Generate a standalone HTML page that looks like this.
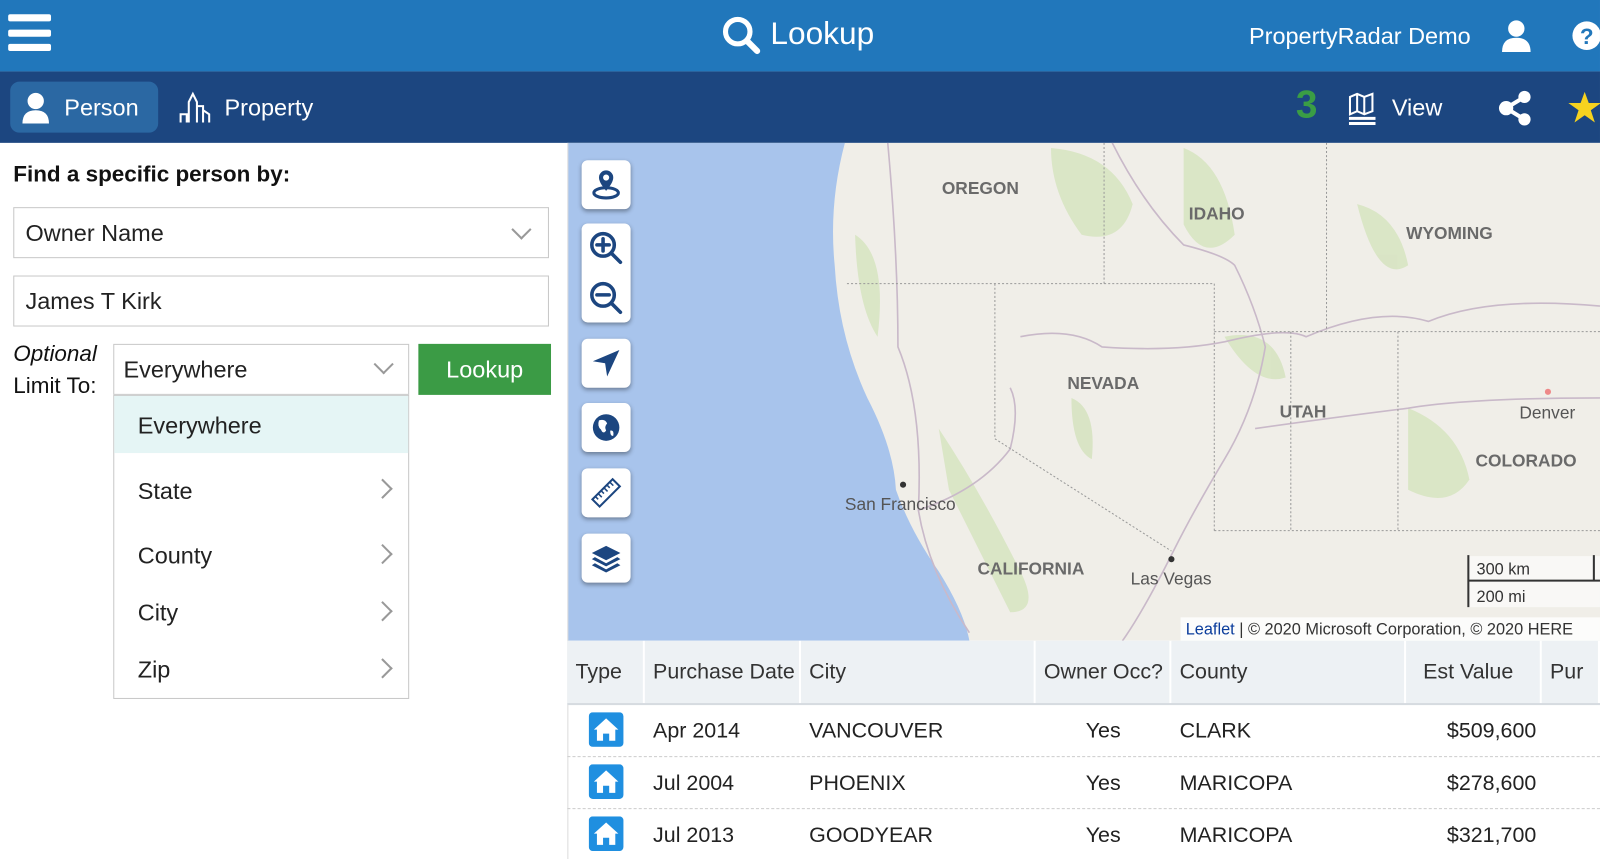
<!DOCTYPE html>
<html><head><meta charset="utf-8"><style>
*{box-sizing:border-box;margin:0;padding:0}
body{width:1600px;height:859px;overflow:hidden;background:#fff;font-family:"Liberation Sans",sans-serif}
#w{position:absolute;left:0;top:0;width:1568px;height:842px;transform:scale(1.0204);transform-origin:0 0}
.a{position:absolute}
.top{left:0;top:0;width:1568px;height:70px;background:#2177bb}
.sub{left:0;top:70px;width:1568px;height:70px;background:#1c4680}
.wt{color:#fff}
.box{border:1px solid #c8c8c8;background:#fff;font-size:23px;color:#222;padding-left:11px;display:flex;align-items:center}
.mb{left:570px;width:48px;height:48px;background:#fff;border-radius:6px;box-shadow:0 2px 4px rgba(0,0,0,.35);display:flex;align-items:center;justify-content:center}
.th{top:628px;height:62px;background:#edf1f4;font-size:21px;color:#333;display:flex;align-items:center;padding-left:8px;border-right:2px solid #fff}
.td{font-size:21px;color:#222}
.dd{left:135px;font-size:23px;color:#222}
.chev{left:368px;width:14px;height:14px;border-right:2px solid #999;border-top:2px solid #999;transform:rotate(45deg)}
.hl{height:0;border-top:1px dashed #ccc;left:556px;width:1012px}
</style></head><body><div id="w">
<div class="a top"></div><div class="a sub"></div>
<!-- hamburger -->
<div class="a" style="left:8px;top:14px;width:42px;height:7px;background:#fff;border-radius:2px"></div>
<div class="a" style="left:8px;top:29px;width:42px;height:7px;background:#fff;border-radius:2px"></div>
<div class="a" style="left:8px;top:43px;width:42px;height:7px;background:#fff;border-radius:2px"></div>
<svg class="a" style="left:706px;top:14px" width="40" height="40" viewBox="0 0 40 40"><circle cx="17" cy="17" r="12" fill="none" stroke="#fff" stroke-width="5"/><line x1="26" y1="26" x2="36" y2="36" stroke="#fff" stroke-width="6" stroke-linecap="round"/></svg>
<div class="a wt" style="left:755px;top:15px;font-size:31px">Lookup</div>
<div class="a wt" style="left:1224px;top:22px;font-size:23px">PropertyRadar Demo</div>
<svg class="a" style="left:1470px;top:18px" width="32" height="34" viewBox="0 0 32 34"><circle cx="16" cy="10" r="8" fill="#fff"/><path d="M2 33 Q2 19 16 19 Q30 19 30 33Z" fill="#fff"/></svg>
<svg class="a" style="left:1540px;top:20px" width="28" height="30" viewBox="0 0 28 30"><circle cx="15" cy="15" r="14" fill="#fff"/><text x="15" y="23" font-size="22" font-weight="bold" text-anchor="middle" fill="#2177bb" font-family="Liberation Sans">?</text></svg>
<!-- subbar -->
<div class="a" style="left:10px;top:80px;width:145px;height:50px;background:#2b68a3;border-radius:9px"></div>
<svg class="a" style="left:20px;top:90px" width="30" height="32" viewBox="0 0 30 32"><circle cx="15" cy="9" r="8" fill="#fff"/><path d="M2 31 Q2 18 15 18 Q28 18 28 31Z" fill="#fff"/></svg>
<div class="a wt" style="left:63px;top:92px;font-size:23px">Person</div>
<svg class="a" style="left:175px;top:88px" width="36" height="34" viewBox="0 0 36 34" fill="none" stroke="#fff" stroke-width="2"><path d="M2 32 V24 H8 V32 M10 32 V12 L14 4 L18 12 V32 M18 32 V16 H24 V32 M24 32 V20 L30 24 V32"/></svg>
<div class="a wt" style="left:220px;top:92px;font-size:23px">Property</div>
<div class="a" style="left:1270px;top:82px;font-size:38px;font-weight:bold;color:#3a9d45">3</div>
<svg class="a" style="left:1320px;top:90px" width="30" height="34" viewBox="0 0 30 34" fill="none" stroke="#fff" stroke-width="2"><path d="M3 5 L10 2 L17 5 L25 2 V19 L17 22 L10 19 L3 22Z M10 2 V19 M17 5 V22"/><path d="M2 26 H28 M2 31 H28" stroke-width="3"/></svg>
<div class="a wt" style="left:1364px;top:92px;font-size:23px">View</div>
<svg class="a" style="left:1468px;top:88px" width="34" height="36" viewBox="0 0 34 36"><circle cx="26" cy="7" r="6" fill="#fff"/><circle cx="8" cy="18" r="7" fill="#fff"/><circle cx="26" cy="29" r="6" fill="#fff"/><path d="M8 18 L26 7 M8 18 L26 29" stroke="#fff" stroke-width="4"/></svg>
<svg class="a" style="left:1536px;top:88px" width="34" height="34" viewBox="0 0 34 34"><path d="M17 2 L21 13 L33 13 L23 20 L27 32 L17 25 L7 32 L11 20 L1 13 L13 13Z" fill="#f6d21f"/></svg>
<!-- left panel -->
<div class="a" style="left:13px;top:158px;font-size:22px;font-weight:bold;color:#111">Find a specific person by:</div>
<div class="a box" style="left:13px;top:203px;width:525px;height:50px">Owner Name</div>
<div class="a" style="left:504px;top:218px;width:14px;height:14px;border-right:2px solid #999;border-bottom:2px solid #999;transform:rotate(45deg)"></div>
<div class="a box" style="left:13px;top:270px;width:525px;height:50px">James T Kirk</div>
<div class="a" style="left:13px;top:334px;font-size:22px;font-style:italic;color:#111">Optional</div>
<div class="a" style="left:13px;top:365px;font-size:22px;color:#111">Limit To:</div>
<div class="a box" style="left:111px;top:337px;width:290px;height:50px;padding-left:9px">Everywhere</div>
<div class="a" style="left:369px;top:350px;width:14px;height:14px;border-right:2px solid #999;border-bottom:2px solid #999;transform:rotate(45deg)"></div>
<div class="a" style="left:410px;top:337px;width:130px;height:50px;background:#3b9b45;color:#fff;font-size:23px;display:flex;align-items:center;justify-content:center">Lookup</div>
<div class="a" style="left:111px;top:387px;width:290px;height:298px;border:1px solid #c8c8c8;background:#fff"></div>
<div class="a" style="left:112px;top:388px;width:288px;height:56px;background:#e5f5f5"></div>
<div class="a dd" style="top:404px">Everywhere</div>
<div class="a dd" style="top:468px">State</div><div class="a chev" style="top:472px"></div>
<div class="a dd" style="top:531px">County</div><div class="a chev" style="top:536px"></div>
<div class="a dd" style="top:587px">City</div><div class="a chev" style="top:592px"></div>
<div class="a dd" style="top:643px">Zip</div><div class="a chev" style="top:648px"></div>
<!-- map -->
<svg class="a" style="left:556px;top:140px" width="1012" height="488" viewBox="556 140 1012 488">
<rect x="556" y="140" width="1012" height="488" fill="#f0eee8"/>
<path d="M556 140 H828 Q812 200 818 260 Q822 330 850 390 Q876 440 878 480 Q892 520 920 560 Q945 600 950 628 H556Z" fill="#a8c4ec"/>
<g fill="#d7e4c2" opacity=".9">
<path d="M1030 145 Q1090 150 1110 200 Q1100 240 1060 230 Q1030 190 1030 145Z"/>
<path d="M1160 145 Q1200 160 1210 230 Q1180 260 1160 220Z"/>
<path d="M838 230 Q870 250 860 330 Q840 300 838 230Z"/>
<path d="M920 420 Q960 480 1000 560 Q1020 600 990 600 Q960 540 930 480Z"/>
<path d="M1380 400 Q1430 420 1440 470 Q1420 500 1380 480Z"/>
<path d="M1050 390 Q1075 400 1070 450 Q1050 440 1050 390Z"/>
<path d="M1200 330 Q1250 320 1260 370 Q1230 380 1200 330Z"/>
<path d="M1330 200 Q1370 210 1380 260 Q1350 280 1330 200Z"/>
</g>
<g fill="none" stroke="#c9b9c9" stroke-width="1.6">
<path d="M870 140 Q880 250 880 340 Q905 400 900 500 Q910 560 950 620"/>
<path d="M1000 330 Q1050 320 1080 340 Q1150 345 1200 335 Q1260 320 1280 330 Q1350 300 1400 315 Q1460 290 1568 300"/>
<path d="M1090 140 Q1120 200 1160 240 Q1200 250 1210 260 Q1230 300 1240 340 Q1230 400 1200 450 Q1170 500 1150 540 Q1120 600 1100 628"/>
<path d="M1230 420 Q1300 410 1380 400 Q1440 390 1568 390"/>
<path d="M900 500 Q960 480 990 440 Q1000 400 990 380"/>
</g>
<g fill="none" stroke="#999" stroke-width="1" stroke-dasharray="2,2">
<path d="M830 278 H1190 M1082 140 V278 M975 278 V430 L1148 540 M1190 278 V520 M1190 325 H1568 M1265 325 V520 M1190 520 H1568 M1370 325 V520 M1300 140 V325"/>
</g>
<circle cx="885" cy="475" r="3" fill="#333"/><circle cx="1148" cy="548" r="3" fill="#333"/><circle cx="1517" cy="384" r="3" fill="#e88"/>
<g font-family="Liberation Sans" font-weight="bold" font-size="17" fill="#6a6a6a">
<text x="923" y="190">OREGON</text><text x="1165" y="215">IDAHO</text><text x="1378" y="234">WYOMING</text>
<text x="1046" y="381">NEVADA</text><text x="1254" y="409">UTAH</text><text x="1446" y="457">COLORADO</text>
<text x="958" y="563">CALIFORNIA</text></g>
<g font-family="Liberation Sans" font-size="17" fill="#555"><text x="828" y="500">San Francisco</text><text x="1108" y="573">Las Vegas</text><text x="1489" y="410">Denver</text></g>
<rect x="1438" y="545" width="130" height="50" fill="#fff" opacity=".6"/>
<path d="M1439 544 V569 H1568 M1439 569 V595 M1562 544 V569" stroke="#333" stroke-width="2" fill="none"/>
<text x="1447" y="563" font-size="16" font-family="Liberation Sans" fill="#333">300 km</text>
<text x="1447" y="590" font-size="16" font-family="Liberation Sans" fill="#333">200 mi</text>
<rect x="1157" y="605" width="411" height="23" fill="#fff" opacity=".8"/>
<text x="1162" y="622" font-size="16" font-family="Liberation Sans" fill="#333"><tspan fill="#0b3d9c">Leaflet</tspan> | © 2020 Microsoft Corporation, © 2020 HERE</text>
</svg>
<!-- map controls -->
<div class="a mb" style="top:157px"><svg width="30" height="32" viewBox="0 0 30 32"><path d="M15 2 A7 7 0 0 1 22 9 Q22 14 15 22 Q8 14 8 9 A7 7 0 0 1 15 2Z" fill="#1c4680"/><circle cx="15" cy="9" r="3" fill="#fff"/><ellipse cx="15" cy="24" rx="12" ry="5" fill="none" stroke="#1c4680" stroke-width="3"/></svg></div>
<div class="a mb" style="top:219px;height:97px;flex-direction:column;justify-content:space-around"><svg width="34" height="34" viewBox="0 0 34 34" fill="none" stroke="#1c4680" stroke-width="3.5"><circle cx="14" cy="14" r="11"/><path d="M22 22 L31 31 M14 8 V20 M8 14 H20" stroke-linecap="round"/></svg><svg width="34" height="34" viewBox="0 0 34 34" fill="none" stroke="#1c4680" stroke-width="3.5"><circle cx="14" cy="14" r="11"/><path d="M22 22 L31 31 M8 14 H20" stroke-linecap="round"/></svg></div>
<div class="a mb" style="top:332px"><svg width="30" height="30" viewBox="0 0 30 30"><path d="M28 2 L2 13 L14 15 L16 28Z" fill="#1c4680"/></svg></div>
<div class="a mb" style="top:395px"><svg width="30" height="30" viewBox="0 0 30 30"><circle cx="15" cy="15" r="13" fill="#1c4680"/><path d="M8 8 Q14 6 16 11 Q13 14 15 18 Q12 22 10 17 Q6 14 8 8Z M19 18 Q23 17 22 23 Q19 24 19 18Z" fill="#fff"/></svg></div>
<div class="a mb" style="top:459px"><svg width="32" height="32" viewBox="0 0 32 32"><g transform="rotate(-45 16 16)"><rect x="2" y="11" width="28" height="10" fill="none" stroke="#1c4680" stroke-width="2"/><path d="M6 11 V15 M10 11 V16 M14 11 V15 M18 11 V16 M22 11 V15 M26 11 V16" stroke="#1c4680" stroke-width="1.5"/></g></svg></div>
<div class="a mb" style="top:523px"><svg width="32" height="30" viewBox="0 0 32 30" fill="#1c4680"><path d="M16 3 L30 10 L16 17 L2 10Z"/><path d="M5 14 L16 20 L27 14 L30 16 L16 23 L2 16Z"/><path d="M5 20 L16 26 L27 20 L30 22 L16 29 L2 22Z"/></svg></div>
<!-- table -->
<div class="a" style="left:556px;top:140px;width:1px;height:702px;background:#ddd"></div>
<div class="a th" style="left:556px;width:76px">Type</div>
<div class="a th" style="left:632px;width:153px">Purchase Date</div>
<div class="a th" style="left:785px;width:230px">City</div>
<div class="a th" style="left:1015px;width:133px">Owner Occ?</div>
<div class="a th" style="left:1148px;width:230px">County</div>
<div class="a th" style="left:1378px;width:133px;justify-content:flex-end;padding-right:26px">Est Value</div>
<div class="a th" style="left:1511px;width:57px">Pur</div>
<div class="a" style="left:556px;top:689px;width:1012px;height:2px;background:#d6dbe0"></div>
<div class="a hl" style="top:741px"></div><div class="a hl" style="top:792px"></div>
<svg width="0" height="0" style="position:absolute"><defs><g id="h"><rect x="0" y="0" width="34" height="34" rx="4" fill="#1f8fe0"/><path d="M17 6 L29 17 H26 V28 H20 V21 H14 V28 H8 V17 H5Z" fill="#fff"/></g></defs></svg>
<svg class="a" style="left:577px;top:698px" width="34" height="34"><use href="#h"/></svg>
<svg class="a" style="left:577px;top:749px" width="34" height="34"><use href="#h"/></svg>
<svg class="a" style="left:577px;top:800px" width="34" height="34"><use href="#h"/></svg>
<div class="a td" style="left:640px;top:705px">Apr 2014</div><div class="a td" style="left:793px;top:705px">VANCOUVER</div><div class="a td" style="left:1064px;top:705px">Yes</div><div class="a td" style="left:1156px;top:705px">CLARK</div><div class="a td" style="left:1418px;top:705px">$509,600</div>
<div class="a td" style="left:640px;top:756px">Jul 2004</div><div class="a td" style="left:793px;top:756px">PHOENIX</div><div class="a td" style="left:1064px;top:756px">Yes</div><div class="a td" style="left:1156px;top:756px">MARICOPA</div><div class="a td" style="left:1418px;top:756px">$278,600</div>
<div class="a td" style="left:640px;top:807px">Jul 2013</div><div class="a td" style="left:793px;top:807px">GOODYEAR</div><div class="a td" style="left:1064px;top:807px">Yes</div><div class="a td" style="left:1156px;top:807px">MARICOPA</div><div class="a td" style="left:1418px;top:807px">$321,700</div>
</div></body></html>
